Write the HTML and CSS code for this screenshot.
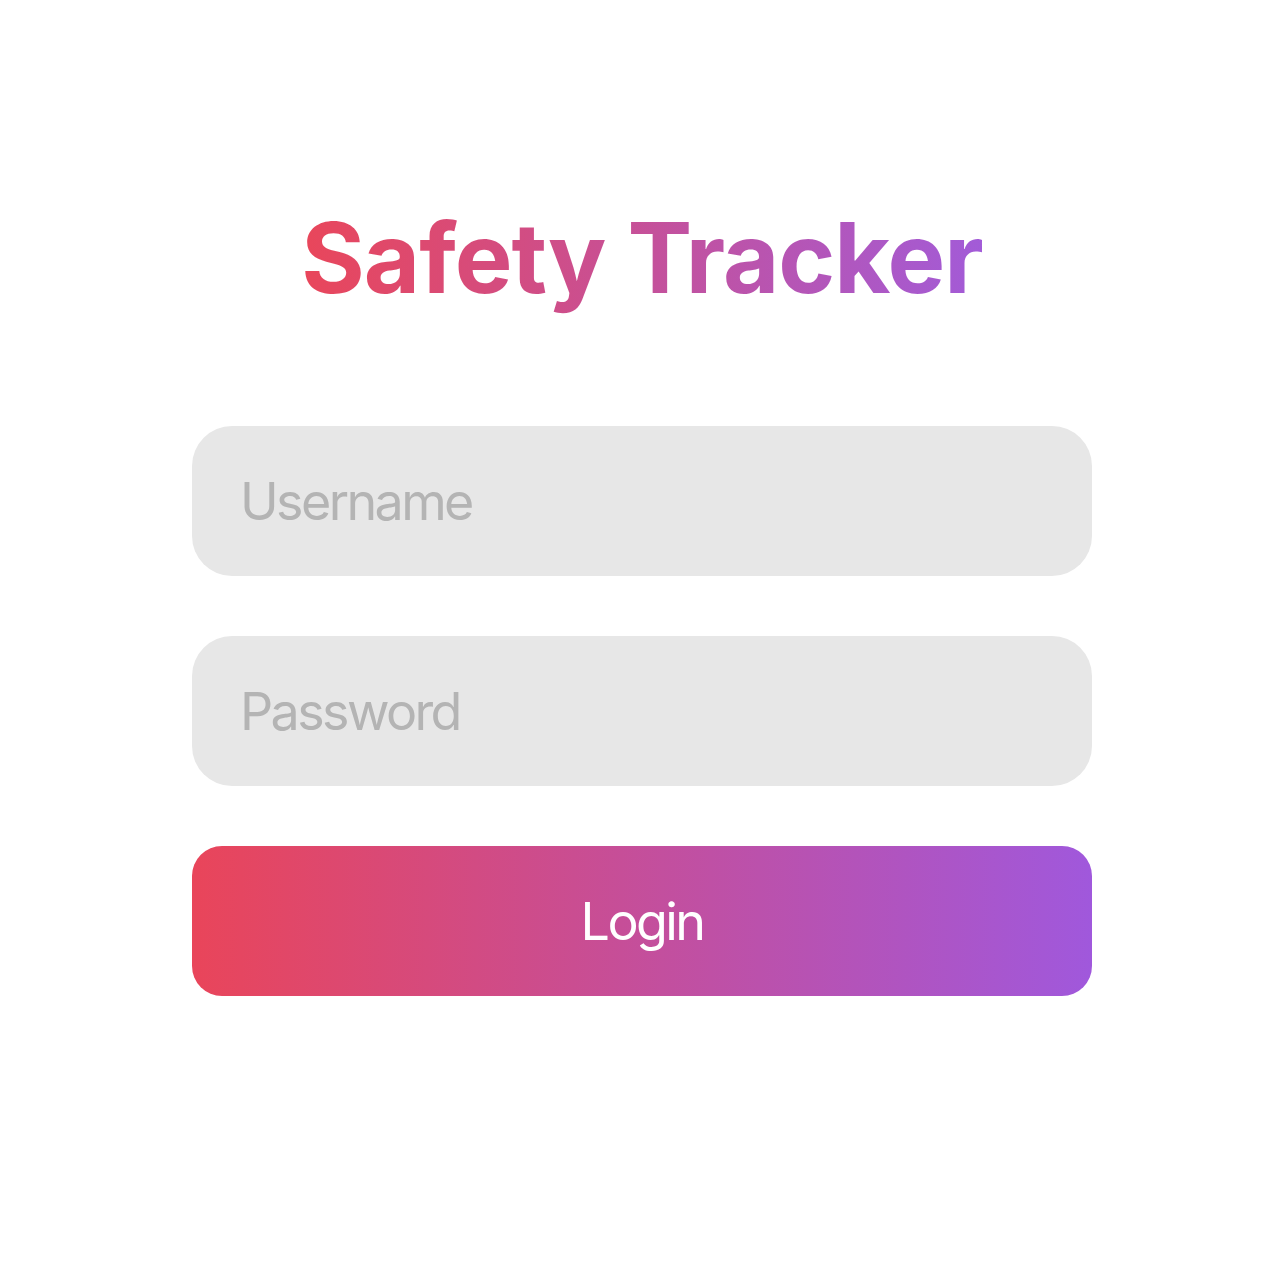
FILE: index.html
```html
<!DOCTYPE html>
<html>
<head>
<meta charset="utf-8">
<link rel="stylesheet" href="styles.css">
</head>
<body>
<main class="page">
  <h1 class="title">Safety Tracker</h1>
  <form class="form">
    <input class="field" type="text" placeholder="Username">
    <input class="field" type="password" placeholder="Password">
    <button class="login" type="button">Login</button>
  </form>
</main>
</body>
</html>
```
FILE: styles.css
```css
html, body {
  margin: 0;
  padding: 0;
  background: #ffffff;
}
.page {
  display: flex;
  flex-direction: column;
  align-items: center;
  padding-top: 198px;
  font-family: Inter, "Noto Sans", sans-serif;
}
.title {
  margin: 0;
  font-size: 97px;
  font-weight: 700;
  line-height: 120px;
  letter-spacing: -1px;
  background: linear-gradient(90deg, #e9465a 0%, #a25bd8 100%);
  -webkit-background-clip: text;
  background-clip: text;
  color: transparent;
}
.form {
  margin-top: 108px;
  width: 900px;
  display: flex;
  flex-direction: column;
  gap: 60px;
}
.field {
  box-sizing: border-box;
  height: 150px;
  border: none;
  outline: none;
  border-radius: 40px;
  background: #e7e7e7;
  padding: 0 48px;
  font-family: Inter, "Noto Sans", sans-serif;
  font-size: 52px;
  letter-spacing: -2.6px;
  color: #333;
}
.field::placeholder {
  color: #b4b4b4;
}
.login {
  height: 150px;
  border: none;
  border-radius: 30px;
  background: linear-gradient(90deg, #e9455a 0%, #a058dc 100%);
  color: #ffffff;
  font-family: Inter, "Noto Sans", sans-serif;
  font-size: 52px;
  font-weight: 400;
  letter-spacing: -2.6px;
  cursor: pointer;
}
```
